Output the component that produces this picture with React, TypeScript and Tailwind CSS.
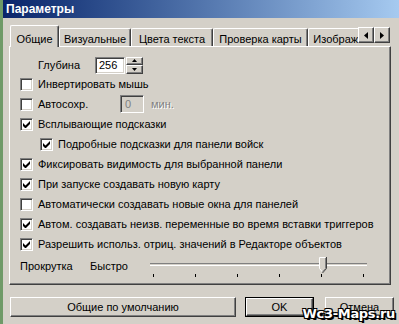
import React from "react";

const raised =
  "border border-t-white border-l-white border-r-[#404040] border-b-[#404040] shadow-[inset_-1px_-1px_0_#808080]";
const sunken =
  "border border-t-[#808080] border-l-[#808080] border-r-white border-b-white shadow-[inset_1px_1px_0_#404040,inset_-1px_-1px_0_#d4d0c8]";

function CheckBox({ checked }: { checked: boolean }) {
  return (
    <div className={`w-[13px] h-[13px] bg-white shrink-0 flex items-center justify-center ${sunken}`}>
      {checked && (
        <svg width="7" height="7" viewBox="0 0 7 7">
          <path d="M0 2v3l2 2h1l4-4V0L2.5 4.5z" fill="#000" />
        </svg>
      )}
    </div>
  );
}

function Row({ checked, label, indent = false, children }: { checked: boolean; label: string; indent?: boolean; children?: React.ReactNode }) {
  return (
    <div className={`h-[20px] flex items-center ${indent ? "pl-[30px]" : "pl-[10px]"}`}>
      <CheckBox checked={checked} />
      <span className="ml-[5px] whitespace-nowrap">{label}</span>
      {children}
    </div>
  );
}

function Arrow({ dir }: { dir: "up" | "down" | "left" | "right" }) {
  if (dir === "up")
    return (
      <svg width="5" height="3" viewBox="0 0 5 3"><path d="M2.5 0L5 3H0z" fill="#000" /></svg>
    );
  if (dir === "down")
    return (
      <svg width="5" height="3" viewBox="0 0 5 3"><path d="M0 0h5L2.5 3z" fill="#000" /></svg>
    );
  if (dir === "left")
    return (
      <svg width="4" height="7" viewBox="0 0 4 7"><path d="M4 0v7L0 3.5z" fill="#000" /></svg>
    );
  return (
    <svg width="4" height="7" viewBox="0 0 4 7"><path d="M0 0l4 3.5L0 7z" fill="#000" /></svg>
  );
}

export default function App() {
  const tabs = [
    { label: "Визуальные", w: "w-[72px]" },
    { label: "Цвета текста", w: "w-[82px]" },
    { label: "Проверка карты", w: "w-[95px]" },
    { label: "Изображение", w: "w-[80px]" },
  ];
  return (
    <div className="w-[399px] h-[324px] relative overflow-hidden bg-[#d4d0c8] flex font-['Liberation_Sans',Arial,sans-serif] text-[11px] text-black leading-[13px]">
      <div className="w-[3px] bg-[#6f9a68] shrink-0" />
      <div className="flex-1 flex flex-col">
        {/* title bar */}
        <div className="h-[18px] bg-gradient-to-r from-[#0a246a] to-[#a6caf0] flex items-center pl-[3px]">
          <span className="text-white font-bold text-[12px]">Параметры</span>
        </div>

        {/* tabs */}
        <div className="mt-[7px] h-[22px] mb-[-1px] relative z-10 flex pl-[7px]">
          <div className="w-[348px] overflow-hidden flex items-end">
            <div className={`h-[22px] w-[49px] shrink-0 bg-[#d4d0c8] rounded-t-[2px] border-l border-t border-white border-r border-r-[#404040] shadow-[inset_-1px_0_0_#808080] flex items-start justify-center pt-[7px]`}>
              Общие
            </div>
            {tabs.map((t) => (
              <div
                key={t.label}
                className={`h-[18px] mb-[1px] ${t.w} shrink-0 rounded-t-[2px] border-l border-t border-white border-r border-r-[#404040] shadow-[inset_-1px_0_0_#808080] flex items-start justify-center pt-[4px] whitespace-nowrap`}
              >
                {t.label}
              </div>
            ))}
          </div>
          <div className="flex pt-[2px] items-start">
            <div className={`w-[16px] h-[16px] flex items-center justify-center bg-[#d4d0c8] ${raised}`}>
              <Arrow dir="left" />
            </div>
            <div className={`w-[16px] h-[16px] flex items-center justify-center bg-[#d4d0c8] ${raised}`}>
              <Arrow dir="right" />
            </div>
          </div>
        </div>

        {/* panel */}
        <div className="ml-[6px] w-[382px] h-[239px] border border-t-white border-l-white border-r-[#404040] border-b-[#404040] shadow-[inset_-1px_-1px_0_#808080] flex flex-col pt-[9px]">
          <div className="h-[18px] flex items-center pl-[28px]">
            <span className="w-[57px]">Глубина</span>
            <div className={`w-[30px] h-[17px] bg-white ${sunken} flex items-center pl-[3px]`}>256</div>
            <div className="ml-[1px] w-[17px] h-[17px] flex flex-col">
              <div className={`h-[8px] flex items-center justify-center ${raised}`}>
                <Arrow dir="up" />
              </div>
              <div className={`h-[9px] flex items-center justify-center ${raised}`}>
                <Arrow dir="down" />
              </div>
            </div>
          </div>
          <Row checked={false} label="Инвертировать мышь" />
          <div className="h-[20px] flex items-center pl-[10px]">
            <CheckBox checked={false} />
            <span className="ml-[5px] w-[82px]">Автосохр.</span>
            <div className={`w-[24px] h-[18px] ${sunken} flex items-center pl-[4px] text-[#808080]`}>0</div>
            <span className="ml-[7px] text-[#808080] [text-shadow:1px_1px_0_#ffffff]">мин.</span>
          </div>
          <Row checked={true} label="Всплывающие подсказки" />
          <Row checked={true} indent label="Подробные подсказки для панели войск" />
          <Row checked={true} label="Фиксировать видимость для выбранной панели" />
          <Row checked={true} label="При запуске создавать новую карту" />
          <Row checked={false} label="Автоматически создавать новые окна для панелей" />
          <Row checked={true} label="Автом. создавать неизв. переменные во время вставки триггеров" />
          <Row checked={true} label="Разрешить использ. отриц. значений в Редакторе объектов" />
          <div className="h-[29px] flex items-start pl-[10px]">
            <span className="w-[70px] pt-[6px]">Прокрутка</span>
            <span className="w-[60px] pt-[6px]">Быстро</span>
            <div className="w-[217px] h-[29px] relative">
              <div className="absolute left-0 right-0 top-[9px] h-[3px] border-t border-t-[#808080] border-b border-b-white bg-[#404040] shadow-[inset_0_-1px_0_#d4d0c8]" />
              <div className="absolute left-[3px] right-[3px] top-[20px] flex justify-between">
                {[0, 1, 2, 3, 4, 5].map((i) => (
                  <div key={i} className="w-[1px] h-[3px] bg-black" />
                ))}
              </div>
              <svg className="absolute left-[169px] top-[3px]" width="8" height="16" viewBox="0 0 8 16">
                <path d="M0.5 0.5h6v11l-3 3.5l-3-3.5z" fill="#d4d0c8" stroke="none" />
                <path d="M0.5 11.5V0.5h6" fill="none" stroke="#ffffff" />
                <path d="M0.5 11.5l3 3.5" fill="none" stroke="#ffffff" />
                <path d="M7.5 0v11.5l-4 4.5" fill="none" stroke="#404040" />
                <path d="M6.5 1v10.5l-3 3.3" fill="none" stroke="#808080" />
              </svg>
            </div>
          </div>
        </div>

        {/* buttons */}
        <div className="mt-[12px] flex pl-[7px]">
          <div className={`w-[226px] h-[20px] flex items-center justify-center ${raised}`}>Общие по умолчанию</div>
          <div className="ml-[9px] w-[69px] h-[20px] border border-black">
            <div className={`w-full h-full flex items-center justify-center ${raised}`}>OK</div>
          </div>
          <div className={`ml-[11px] w-[69px] h-[20px] shrink-0 flex items-center justify-center ${raised}`}>Отмена</div>
        </div>
      </div>

      <div className="absolute right-[4px] bottom-[3px] font-['DejaVu_Sans',sans-serif] font-bold text-[13px] leading-[15px] text-white tracking-[-0.3px] [text-shadow:1px_1px_0_#000,-1px_-1px_0_#000,1px_-1px_0_#000,-1px_1px_0_#000,2px_2px_0_#000]">
        Wc3-Maps.ru
      </div>
    </div>
  );
}
